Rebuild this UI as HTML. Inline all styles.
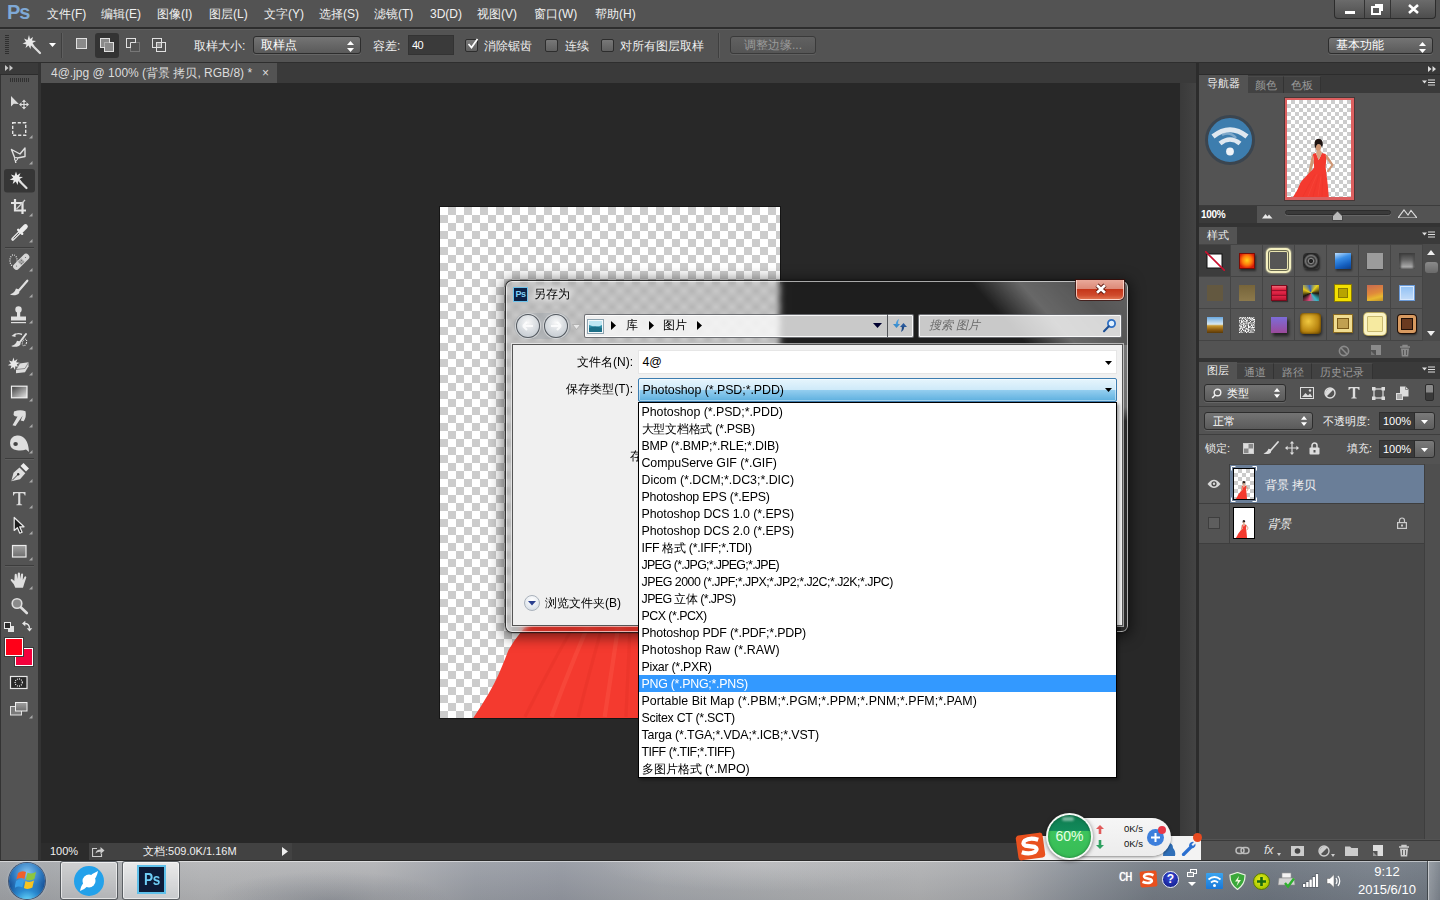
<!DOCTYPE html>
<html lang="zh">
<head>
<meta charset="utf-8">
<title>Photoshop</title>
<style>
*{box-sizing:border-box;margin:0;padding:0}
html,body{width:1440px;height:900px;overflow:hidden;background:#282828}
body{font-family:"Liberation Sans",sans-serif;font-size:12px;color:#e6e6e6;position:relative}
.abs{position:absolute}
/* ---------- menubar ---------- */
#menubar{left:0;top:0;width:1440px;height:29px;background:#535353;border-bottom:2px solid #2d2d2d}
#menubar .logo{left:7px;top:1px;font-size:20px;font-weight:bold;color:#7fa9d6;letter-spacing:-1px}
#menubar .mi{top:7px;line-height:15px;font-size:12px;color:#f0f0f0;white-space:nowrap}
/* ---------- options bar ---------- */
#optbar{left:0;top:29px;width:1440px;height:34px;background:#535353;box-shadow:inset 0 1px 0 #5e5e5e;border-bottom:1px solid #2e2e2e}

.winbtns{left:1334px;top:0;width:102px;height:19px;border:1px solid #2c2c2c;border-top:none;border-radius:0 0 4px 4px;background:linear-gradient(#6b6b6b,#4d4d4d);overflow:hidden}
.wb{top:0;height:18px;border-right:1px solid #333}
.wb:last-child{border-right:none}
.olabel{top:9px;font-size:12px;color:#f0f0f0;white-space:nowrap}
.osep{top:4px;width:1px;height:25px;background:#3f3f3f;border-right:1px solid #5e5e5e;width:2px}
.sel{border:1px solid #2d2d2d;border-radius:3px;background:linear-gradient(#747474,#5a5a5a);color:#fff;font-size:12px;box-shadow:0 1px 0 #666}
.sel .ud{right:6px;top:4px}
.cb{width:13px;height:13px;border:1px solid #2d2d2d;border-radius:2px;background:linear-gradient(#787878,#606060);top:10px}
/* ---------- tools ---------- */
#tools{left:0;top:63px;width:38px;height:797px;background:#535353}
#toolsep{left:38px;top:63px;width:3px;height:797px;background:#333}
/* ---------- tab bar ---------- */
#tabbar{left:41px;top:63px;width:1157px;height:20px;background:#3a3a3a}
#tab{left:0;top:0;width:236px;height:20px;background:#535353;color:#dcdcdc;font-size:12px;line-height:20px;padding-left:10px;white-space:nowrap}
/* ---------- canvas ---------- */
#canvasarea{left:41px;top:83px;width:1157px;height:760px;background:#282828}
#statusbar{left:41px;top:843px;width:1157px;height:17px;background:#3b3b3b}

/* ---------- document ---------- */
#doc{left:440px;top:207px;width:340px;height:511px;background:repeating-conic-gradient(#ccc 0 25%,#fff 0 50%) 0 0/16px 16px;box-shadow:0 0 0 1px #151515;overflow:hidden}
/* ---------- dialog ---------- */
#dlg{left:505px;top:280px;width:624px;height:353px;border-radius:7px;border:1px solid rgba(20,20,20,.85);box-shadow:0 0 0 1px rgba(0,0,0,.12),0 2px 14px 2px rgba(0,0,0,.55);-webkit-backdrop-filter:blur(3px);backdrop-filter:blur(3px);background:linear-gradient(90deg,rgba(0,0,0,.17) 0 268px,rgba(0,0,0,.24) 290px);color:#000;overflow:hidden}
#dlg .hl{left:0;top:0;right:0;bottom:0;border-radius:6px;border:1px solid rgba(255,255,255,.62)}
#dlg .streak{left:395px;top:0;width:229px;height:64px;background:linear-gradient(48deg,transparent 44%,rgba(255,255,255,.33) 61%,rgba(255,255,255,.25) 80%,rgba(255,255,255,.30) 100%)}
#dlg .rside{right:0;top:64px;width:7px;bottom:0;background:linear-gradient(rgba(255,255,255,.40) 0,rgba(255,255,255,.36) 62px,rgba(255,255,255,.05) 76px,rgba(255,255,255,.05) 100%)}
#client{left:6px;top:63px;width:611px;height:282px;border:1px solid #555;background:#f0f0f0;box-shadow:0 0 0 1px rgba(255,255,255,.55)}
.dl{font-size:12px;color:#000;white-space:nowrap}
.lb{left:638px;top:402px;width:479px;box-shadow:2px 2px 3px rgba(0,0,0,.35);height:376px;background:#fff;border:1px solid #000;color:#000;font-size:12.400px}
.lb div{height:17px;line-height:19px;padding-left:2.500px;white-space:nowrap;overflow:hidden}
.lb .selrow{background:#3399ff;color:#fff}

#dlgc{left:0;top:0;width:0;height:0;color:#000}
.navb{width:24px;height:24px;border-radius:12px;border:1px solid rgba(62,68,75,.85);background:radial-gradient(circle at 50% 35%,rgba(255,255,255,.9),rgba(225,230,235,.75) 55%,rgba(190,198,206,.8));box-shadow:0 0 0 1px rgba(255,255,255,.45)}
.addr{height:24px;border:1px solid rgba(95,98,102,.9);border-radius:2px;background:rgba(255,255,255,.76);box-shadow:inset 0 0 0 1px rgba(255,255,255,.85)}
.combo{left:638px;width:479px;height:24px;font-size:12.400px;line-height:23px;padding-left:3.500px;white-space:nowrap;letter-spacing:-.05px}
/* ---------- right ---------- */
#right{left:1198px;top:63px;width:242px;height:797px;background:#535353}

#rp{left:0;top:0;width:0;height:0;font-size:11px;color:#e8e8e8}
.ptab{height:17px;line-height:17px;font-size:11px;text-align:center;white-space:nowrap}
.ptab.on{background:#535353;color:#f0f0f0}
.ptab.off{background:#424242;color:#9a9a9a;border-right:1px solid #333;border-top:1px solid #4a4a4a}
.pmenu{width:13px;height:8px}
.sw{width:16px;height:16px}
.pl{white-space:nowrap;font-size:11px;color:#f0f0f0;line-height:14px}
.dk{background:#3a3a3a;border:1px solid #2f2f2f;color:#fff;font-size:11px;line-height:16px;padding-left:3px}
.btn2{border:1px solid #2d2d2d;border-radius:0 3px 3px 0;background:linear-gradient(#7a7a7a,#5e5e5e)}
/* ---------- taskbar ---------- */
#taskbar{left:0;top:860px;width:1440px;height:40px;background:linear-gradient(rgba(255,255,255,.05),rgba(0,0,0,.07)),radial-gradient(ellipse 120px 30px at 330px 40px,rgba(120,126,136,.5),transparent),radial-gradient(ellipse 160px 26px at 760px 4px,rgba(200,200,202,.5),transparent),linear-gradient(90deg,#a2a5a9 0,#b5b6b8 14%,#b3b4b7 26%,#9b9fa7 33%,#969aa3 39%,#a5a8ad 46%,#adafb2 55%,#b2b3b5 64%,#a7a9ad 70%,#8b9199 75%,#767d86 80%,#6f7781 88%,#78808a 95%,#717983 100%);border-top:1px solid #2a2a2a;box-shadow:inset 0 1px 0 rgba(255,255,255,.5)}
#taskbar .tb{top:0;height:39px;width:58px;border-radius:3px;border:1px solid rgba(50,55,60,.75);box-shadow:inset 0 0 0 1px rgba(255,255,255,.6)}
#tray{color:#fff;font-size:12px}
</style>
</head>
<body>
<svg width="0" height="0" style="position:absolute"><defs><symbol id="wm" viewBox="0 0 64 96.600" preserveAspectRatio="none">
<path d="M26 54Q24.400 55 24.200 58L20.300 78L21.900 78.600L26.800 62Z" fill="#cf9876"/>
<path d="M38.500 54Q40.600 54.400 41.600 57L46.700 64.700L41.200 72.300L39.800 71L44.200 64.800L39 58Z" fill="#cf9876"/>
<path d="M25.900 53.900L29 52.800L31.600 60L35 52.800L38.700 53.900L39.200 60L38.600 67L39.400 73.300Q41 85 41.800 96.600L6 96.600Q9.500 91.500 11 88.100Q12.300 85 12.900 83.400Q14 81.500 15.100 80.200Q20 74.500 25.300 69.600L27.100 67.200L26.800 60Z" fill="#f43a2f"/>
<path d="M29 52.800L31.600 60L35 52.800L33.600 50L30.400 50Z" fill="#d8a483"/>
<ellipse cx="31.300" cy="47.200" rx="2.700" ry="3.400" fill="#cf9673"/>
<path d="M27.600 44.500Q27 39 31.600 38.600Q36.200 39 35.800 44.500Q35 48 34.400 46Q33.500 43.500 30.500 44Q28.800 45 28.800 48Q27.500 47 27.600 44.500Z" fill="#1e1412"/>
<path d="M16 96Q22 84 28 74M26 96Q29 84 32 74M35 96Q35.500 84 36 74" fill="none" stroke="#d42a22" stroke-width=".6" opacity=".22"/><path d="M21 96Q25.500 84 30 74M31 96Q32.500 86 34 76" fill="none" stroke="#ff6a58" stroke-width=".8" opacity=".25"/>
</symbol></defs></svg>
<div id="menubar" class="abs">
  <div class="logo abs">Ps</div>
  <div class="mi abs" style="left:47px">文件(F)</div><div class="mi abs" style="left:101px">编辑(E)</div><div class="mi abs" style="left:157px">图像(I)</div><div class="mi abs" style="left:209px">图层(L)</div><div class="mi abs" style="left:264px">文字(Y)</div><div class="mi abs" style="left:319px">选择(S)</div><div class="mi abs" style="left:374px">滤镜(T)</div><div class="mi abs" style="left:430px">3D(D)</div><div class="mi abs" style="left:477px">视图(V)</div><div class="mi abs" style="left:534px">窗口(W)</div><div class="mi abs" style="left:595px">帮助(H)</div>
  <div class="winbtns abs">
    <div class="wb abs" style="left:0;width:30px"><svg width="30" height="18"><rect x="10" y="11" width="10" height="3" fill="#fff"/></svg></div>
    <div class="wb abs" style="left:30px;width:26px"><svg width="26" height="18"><path d="M10 4h8v7h-2v-4h-6z" fill="#fff"/><rect x="7" y="7" width="8" height="7" fill="none" stroke="#fff" stroke-width="2"/></svg></div>
    <div class="wb abs" style="left:56px;width:46px"><svg width="46" height="18"><path d="M18 5l9 8M27 5l-9 8" stroke="#fff" stroke-width="2.6" fill="none"/></svg></div>
  </div>
</div>
<div id="optbar" class="abs">
  <div class="abs" style="left:5px;top:6px;width:4px;height:20px;background:repeating-linear-gradient(#2f2f2f 0 1px,transparent 1px 2px)"></div>
  <svg class="abs" style="left:21px;top:5px" width="22" height="22" viewBox="0 0 22 22"><path d="M9 9L19 19" stroke="#ddd" stroke-width="2.2" stroke-linecap="round"/><path d="M8 1l1 4 3-2-1 3.5 4 .5-3.5 2 2 3-3.5-1-.5 4-2-3.5-3 2.500 1-3.500-4-1 3.500-1.500-2-3.500 3.500 1.500z" fill="#e8e8e8"/></svg>
  <svg class="abs" style="left:49px;top:14px" width="7" height="4"><path d="M0 0h7l-3.500 4z" fill="#fff"/></svg>
  <div class="osep abs" style="left:61px"></div>
  <svg class="abs" style="left:76px;top:9px" width="11" height="11"><rect x=".5" y=".5" width="10" height="10" fill="#8a8a8a" stroke="#e0e0e0"/></svg>
  <div class="abs" style="left:95px;top:4px;width:24px;height:25px;background:#333;border-radius:3px"></div>
  <svg class="abs" style="left:100px;top:9px" width="14" height="14"><rect x=".5" y=".5" width="9" height="9" fill="#8a8a8a" stroke="#e0e0e0"/><rect x="4.500" y="4.500" width="9" height="9" fill="#8a8a8a" stroke="#e0e0e0"/><rect x="1" y="1" width="8" height="8" fill="#8a8a8a" opacity=".6"/></svg>
  <svg class="abs" style="left:126px;top:9px" width="14" height="14"><rect x="4.500" y="4.500" width="9" height="9" fill="none" stroke="#777"/><rect x=".5" y=".5" width="9" height="9" fill="#535353" stroke="#e0e0e0"/><rect x="5" y="5" width="5" height="5" fill="#535353"/><path d="M4.500 9.500v-5h5" stroke="#e0e0e0" fill="none"/></svg>
  <svg class="abs" style="left:152px;top:9px" width="14" height="14"><rect x=".5" y=".5" width="9" height="9" fill="none" stroke="#e0e0e0"/><rect x="4.500" y="4.500" width="9" height="9" fill="none" stroke="#e0e0e0"/><rect x="5" y="5" width="4" height="4" fill="#8a8a8a"/></svg>
  <div class="olabel abs" style="left:194px">取样大小:</div>
  <div class="sel abs" style="left:253px;top:7px;width:108px;height:18px;line-height:16px;padding-left:7px">取样点<svg class="ud abs" width="7" height="11"><path d="M0 4l3.5-4 3.5 4zM0 7l3.5 4 3.5-4z" fill="#fff"/></svg></div>
  <div class="olabel abs" style="left:373px">容差:</div>
  <div class="abs" style="left:408px;top:6px;width:46px;height:20px;background:#3a3a3a;border:1px solid #333;color:#fff;font-size:11px;line-height:18px;padding-left:3px;letter-spacing:-.5px">40</div>
  <div class="cb abs" style="left:465px"><svg class="abs" style="left:1px;top:-2px" width="13" height="12"><path d="M1.500 6l3 3.500 6-8.500" stroke="#fff" stroke-width="1.700" fill="none"/></svg></div>
  <div class="olabel abs" style="left:484px">消除锯齿</div>
  <div class="cb abs" style="left:545px"></div>
  <div class="olabel abs" style="left:565px">连续</div>
  <div class="cb abs" style="left:601px"></div>
  <div class="olabel abs" style="left:620px">对所有图层取样</div>
  <div class="osep abs" style="left:718px"></div>
  <div class="abs" style="left:730px;top:7px;width:86px;height:18px;border:1px solid #3a3a3a;border-radius:3px;background:linear-gradient(#616161,#555);color:#9a9a9a;font-size:12px;line-height:16px;text-align:center;box-shadow:0 1px 0 #606060">调整边缘...</div>
  <div class="sel abs" style="left:1328px;top:8px;width:105px;height:17px;line-height:15px;padding-left:7px">基本功能<svg class="ud abs" width="7" height="11"><path d="M0 4l3.5-4 3.5 4zM0 7l3.5 4 3.5-4z" fill="#fff"/></svg></div>
</div>
<div id="tools" class="abs"></div>
<div id="toolsep" class="abs"></div>
<div class="abs" style="left:0;top:63px;width:1px;height:797px;background:#333"></div>
<svg class="abs" style="left:0;top:0" width="42" height="900" viewBox="0 0 42 900">
<defs>
<linearGradient id="gA" x1="0" y1="0" x2="1" y2="1"><stop offset="0" stop-color="#3a3a3a"/><stop offset="1" stop-color="#e8e8e8"/></linearGradient>
<linearGradient id="gB" x1="0" y1="0" x2="0" y2="1"><stop offset="0" stop-color="#a0a0a0"/><stop offset="1" stop-color="#6e6e6e"/></linearGradient>
</defs>
<rect x="0" y="63" width="38" height="12" fill="#3a3a3a"/>
<rect x="0" y="74" width="38" height="1" fill="#2c2c2c"/>
<path d="M5 65v6l3.500-3zM9.500 65v6l3.500-3z" fill="#c8c8c8"/>
<g fill="#303030"><rect x="10" y="78" width="1" height="4"/><rect x="12" y="78" width="1" height="4"/><rect x="14" y="78" width="1" height="4"/><rect x="16" y="78" width="1" height="4"/><rect x="18" y="78" width="1" height="4"/><rect x="20" y="78" width="1" height="4"/><rect x="22" y="78" width="1" height="4"/><rect x="24" y="78" width="1" height="4"/><rect x="26" y="78" width="1" height="4"/><rect x="28" y="78" width="1" height="4"/></g>
<g fill="#a8a8a8"><path d="M32.500 135v3.500h-3.500z"/><path d="M32.500 161v3.500h-3.500z"/><path d="M32.500 187v3.500h-3.500z"/><path d="M32.500 213v3.500h-3.500z"/><path d="M32.500 239v3.500h-3.500z"/><path d="M32.500 268v3.500h-3.500z"/><path d="M32.500 294v3.500h-3.500z"/><path d="M32.500 320v3.500h-3.500z"/><path d="M32.500 346v3.500h-3.500z"/><path d="M32.500 372v3.500h-3.500z"/><path d="M32.500 398v3.500h-3.500z"/><path d="M32.500 424v3.500h-3.500z"/><path d="M32.500 450v3.500h-3.500z"/><path d="M32.500 479v3.500h-3.500z"/><path d="M32.500 505v3.500h-3.500z"/><path d="M32.500 531v3.500h-3.500z"/><path d="M32.500 557v3.500h-3.500z"/><path d="M32.500 586v3.500h-3.500z"/><path d="M32.500 715v3.500h-3.500z"/></g>
<!-- move -->
<path d="M11 96v10.500l2.800-2.800 5 .2z" fill="#dcdcdc"/>
<g stroke="#dcdcdc" stroke-width="1.200" fill="none"><path d="M20.500 104.500h7M24 101v7"/></g>
<path d="M24 99.500l2.200 2.500h-4.400zM24 109.500l2.200-2.500h-4.400zM19 104.500l2.500-2.200v4.400zM29 104.500l-2.500-2.200v4.400z" fill="#dcdcdc"/>
<!-- marquee -->
<rect x="12.700" y="122.700" width="13" height="12.600" fill="none" stroke="#e4e4e4" stroke-width="1.400" stroke-dasharray="3.200 1.800"/>
<!-- lasso -->
<path d="M11.500 149.500l8.500 4.500 5-6v8.500l-10 2zM15 158.500l.8 4.500" fill="none" stroke="#e0e0e0" stroke-width="1.400" stroke-linejoin="round"/>
<circle cx="16" cy="159" r="1.500" fill="#535353" stroke="#e0e0e0"/>
<!-- wand active -->
<rect x="4" y="169" width="31" height="23.500" rx="3" fill="#363636"/>
<path d="M16 171.500l1.200 3.800 3.300-2.300-1.500 3.700 4 .3-3.400 2 2.300 3-3.700-1-.5 4-2-3.400-3 2.400 1-3.700-4-.6 3.500-2-2.300-3.200 3.700 1.200z" fill="#ececec"/>
<path d="M19.500 181l7 7" stroke="#e0e0e0" stroke-width="2.200" stroke-linecap="round"/>
<!-- crop -->
<path d="M15 199v11.500h11M11 203h11.500v11" fill="none" stroke="#e4e4e4" stroke-width="2.200"/>
<path d="M16.500 209l8.500-9" stroke="#d0d0d0" stroke-width="1.200"/>
<!-- eyedropper -->
<path d="M12.800 239.200l7.500-7.500" stroke="#e0e0e0" stroke-width="3.200" stroke-linecap="round"/>
<path d="M13.500 238.500l6-6" stroke="#666" stroke-width="1"/>
<path d="M21.500 230.500l4-4" stroke="#ececec" stroke-width="4.600" stroke-linecap="round"/>
<path d="M18.200 229.800l4 4" stroke="#ececec" stroke-width="2.400" stroke-linecap="round"/>
<!-- sep -->
<rect x="5" y="247" width="29" height="1" fill="#3c3c3c"/><rect x="5" y="248" width="29" height="1" fill="#5d5d5d"/>
<!-- heal -->
<ellipse cx="13.500" cy="260.500" rx="3.600" ry="5.600" fill="none" stroke="#f0f0f0" stroke-width="1.200" stroke-dasharray="1 1.200"/>
<path d="M16.500 266.500l9.500-9.500" stroke="#d6d6d6" stroke-width="6.600" stroke-linecap="round"/>
<path d="M19.500 263.500l3.500-3.500" stroke="#aaa" stroke-width="5"/>
<g fill="#666"><circle cx="20" cy="262" r=".6"/><circle cx="21.500" cy="263.500" r=".6"/><circle cx="21.500" cy="260.500" r=".6"/><circle cx="23" cy="262" r=".6"/><circle cx="16.500" cy="266" r=".6"/><circle cx="25.500" cy="257.500" r=".6"/></g>
<!-- brush -->
<path d="M27.300 280.700l-8 9.300" stroke="#e0e0e0" stroke-width="2.200" stroke-linecap="round"/>
<path d="M19.200 289.500q1.300 5-4 5.700q-4 .3-5.200-1q4.500-1 6-5.700z" fill="#e0e0e0"/>
<!-- stamp -->
<circle cx="18.500" cy="309.500" r="3.200" fill="#e0e0e0"/><rect x="17" y="311" width="3.200" height="6" fill="#e0e0e0"/>
<rect x="11" y="316.500" width="15" height="4" fill="#e0e0e0"/><rect x="11" y="322" width="15" height="1.200" fill="#e0e0e0"/>
<!-- history brush -->
<path d="M26 334l-6 8" stroke="#e0e0e0" stroke-width="2" stroke-linecap="round"/>
<path d="M20.300 341.500q1.200 4.500-3.500 5.200q-4 .3-5.600-.8q4.500-1 5.800-5.200z" fill="#e0e0e0"/>
<path d="M14 335q4-2.500 8-.5" fill="none" stroke="#e0e0e0" stroke-width="1.400"/><path d="M11.500 336l4-3v4z" fill="#e0e0e0"/>
<ellipse cx="24.500" cy="342.500" rx="2" ry="3.500" fill="none" stroke="#eee" stroke-width="1" stroke-dasharray="1 1" transform="rotate(20 24.500 342.500)"/>
<!-- magic eraser -->
<path d="M13.500 357.500l1 3.500 3-2-1.400 3.300 3.600.4-3 1.800 2 2.700-3.300-.9-.4 3.600-1.800-3-2.700 2.100.9-3.300-3.600-.5 3.100-1.800-2-2.900 3.300 1.100z" fill="#e8e8e8"/>
<path d="M16 369.500l3.500-6 9-1.200v4l-3.500 6-9 1z" fill="#dcdcdc"/><path d="M19.500 363.700l-3.500 5.800 9-1 3.500-6" fill="none" stroke="#777" stroke-width=".8"/>
<!-- gradient -->
<rect x="11.500" y="386.200" width="15.500" height="11.600" fill="url(#gA)" stroke="#f0f0f0" stroke-width="1.200"/>
<!-- smudge -->
<path d="M14 411.500q6-2.500 11.500-.3q1.200 5.500-1.800 10l-3-.8 2-4.800-7.200 10.400-3-.8 5-8.700q-3.200.6-4-1.700z" fill="#dedede"/>
<!-- dodge -->
<path d="M10 443q0-6.500 7-7.500q5-.5 8.500 4q3 4 3.500 12.500l-3-2.500q-4 1.500-9 .8q-7-.8-7-7.300z" fill="#dedede"/>
<ellipse cx="15.600" cy="444" rx="2.300" ry="1.900" fill="#444"/>
<!-- sep -->
<rect x="5" y="458" width="29" height="1" fill="#3c3c3c"/><rect x="5" y="459" width="29" height="1" fill="#5d5d5d"/>
<!-- pen -->
<path d="M11.300 481.300l2.200-8.500 6-5.300 5.800 5.800-5.300 6z" fill="#dedede"/>
<path d="M12 480.500l6-6" stroke="#444" stroke-width="1"/><circle cx="18.200" cy="474.300" r="1.200" fill="#333"/>
<path d="M20.500 466l3-3 5.500 5.500-3 3z" fill="#ececec"/>
<!-- T -->
<path d="M13 492h12.500v3.500h-.8q-.4-2.300-2-2.300h-2.400v10q0 1.200 1.800 1.300v.8h-5.700v-.8q1.800-.1 1.800-1.300v-10h-2.400q-1.600 0-2 2.300h-.8z" fill="#dcdcdc"/>
<!-- path select -->
<path d="M14.200 517.500v13l3.200-2.800 2.400 5.500 2.300-1-2.400-5.400h4.300z" fill="#1c1c1c" stroke="#ececec" stroke-width="1.200" stroke-linejoin="round"/>
<!-- rectangle -->
<rect x="12.500" y="545.500" width="13.500" height="11.500" fill="url(#gB)" stroke="#ececec" stroke-width="1.200"/>
<!-- sep -->
<rect x="5" y="565" width="29" height="1" fill="#3c3c3c"/><rect x="5" y="566" width="29" height="1" fill="#5d5d5d"/>
<!-- hand -->
<path d="M15.300 587.800l-1.500-3.500-3-3.800q-.5-1.200.7-1.400q1 0 2.800 2l.4-6.300q.2-1 1.100-1q1 0 1 1l.5 4.200.5-5.600q.1-1 1.100-1t1.100 1l.1 5.600.9-4.600q.2-1 1.100-.9q1 .1 1 1.100l-.3 5.300 1.600-2.900q.5-.9 1.300-.6q.9.400.5 1.400l-2 6-1.200 4z" fill="#dedede"/>
<!-- zoom -->
<circle cx="17" cy="603.500" r="4.800" fill="#8a8a8a" stroke="#dedede" stroke-width="1.600"/>
<path d="M21 607.500l5.800 5.500" stroke="#dedede" stroke-width="2.600" stroke-linecap="round"/>
<!-- default colors / swap -->
<rect x="8" y="626" width="6" height="6" fill="#e0e0e0"/><rect x="4.500" y="622.500" width="6" height="6" fill="#2a2a2a" stroke="#e8e8e8"/>
<path d="M24.500 623.500q5 0 5 5" fill="none" stroke="#e4e4e4" stroke-width="1.300"/><path d="M22 623.500l3.300-2.800v5.600zM29.500 631.500l-2.800-3.300h5.600z" fill="#e4e4e4"/>
<!-- bg / fg colors -->
<rect x="15.500" y="648.500" width="17" height="17" fill="#f4003c" stroke="#fff"/><rect x="14.500" y="647.500" width="19" height="19" fill="none" stroke="#3a3a3a"/>
<rect x="5.500" y="638.500" width="17" height="17" fill="#ff0018" stroke="#fff"/><rect x="4.500" y="637.500" width="19" height="19" fill="none" stroke="#3a3a3a"/>
<!-- quick mask -->
<rect x="10.500" y="676.500" width="16.500" height="12" fill="#2a2a2a" stroke="#e8e8e8" stroke-width="1.200"/>
<circle cx="18.700" cy="682.500" r="3.600" fill="none" stroke="#fff" stroke-width="1.100" stroke-dasharray="1 1.100"/>
<!-- screen mode -->
<rect x="10.500" y="706.500" width="11" height="8.500" fill="#7a7a7a" stroke="#e0e0e0"/>
<rect x="15.500" y="702.500" width="11.500" height="8.500" fill="url(#gB)" stroke="#f0f0f0"/>
</svg>
<div id="tabbar" class="abs"><div id="tab" class="abs">4@.jpg @ 100% (背景 拷贝, RGB/8) * &nbsp;&nbsp;×</div></div>
<div id="canvasarea" class="abs"></div>
<div id="statusbar" class="abs">
  <div class="abs" style="left:0;top:0;width:48px;height:17px;background:#2c2c2c;color:#f0f0f0;font-size:11px;line-height:16px;padding-left:9px">100%</div>
  <div class="abs" style="left:48px;top:0;width:203px;height:17px;background:#424242"></div>
  <svg class="abs" style="left:51px;top:3px" width="13" height="11"><path d="M5 2.500h-4.500v8h9v-3" fill="none" stroke="#ccc" stroke-width="1.200"/><path d="M3.500 7.500q.5-4 5-4v-2.500l4 3.500-4 3.500v-2.300q-3.500-.2-5 1.800z" fill="#ccc"/></svg>
  <div class="abs" style="left:102px;top:0;color:#f0f0f0;font-size:11px;line-height:16px;white-space:nowrap">文档:509.0K/1.16M</div>
  <svg class="abs" style="left:241px;top:4px" width="6" height="9"><path d="M0 0l6 4.500-6 4.500z" fill="#eee"/></svg>
</div>
<div id="doc" class="abs">
  <svg class="abs" style="left:0;top:0" width="340" height="511"><use href="#wm" x="0" y="0" width="340" height="513"/></svg>
</div>
<div id="dlg" class="abs">
  <div class="streak abs"></div>
  <div class="rside abs"></div>
  <div class="hl abs"></div>
  <div id="client" class="abs"></div>
</div>
<div id="dlgc" class="abs">
  <div class="abs" style="left:513px;top:287px;width:15px;height:15px;background:#0b2146;border:1px solid #6ec3ea;color:#7fd0f5;font-size:9px;font-weight:bold;line-height:13px;text-align:center;letter-spacing:-.5px">Ps</div>
  <div class="dl abs" style="left:534px;top:287px;line-height:15px;text-shadow:0 0 6px #fff,0 0 6px #fff,0 0 8px #fff">另存为</div>
  <div class="abs" style="left:1076px;top:280px;width:48px;height:20px;border:1px solid rgba(255,225,215,.8);border-top:none;border-radius:0 0 5px 5px;background:linear-gradient(#e9a99a 0,#dd8a78 45%,#c5361a 50%,#cf4a2c 80%,#e0724f 100%);box-shadow:0 0 0 1px rgba(60,10,5,.7)"><svg class="abs" style="left:17px;top:3px" width="14" height="12"><path d="M3 2.200l8 7.600M11 2.200l-8 7.600" stroke="#5a1208" stroke-width="4.400" fill="none"/><path d="M3 2.200l8 7.600M11 2.200l-8 7.600" stroke="#fff" stroke-width="2.700" fill="none"/></svg></div>
  <div class="abs" style="left:514px;top:313px;width:57px;height:26px;border-radius:13px;background:rgba(150,158,165,.35)"></div>
  <div class="navb abs" style="left:516px;top:314px"><svg width="22" height="22"><path d="M6 11h10M6 11l4-4M6 11l4 4" stroke="rgba(255,255,255,.8)" stroke-width="2.200" fill="none"/></svg></div>
  <div class="navb abs" style="left:544px;top:314px"><svg width="22" height="22"><path d="M6 11h10M16 11l-4-4M16 11l-4 4" stroke="rgba(255,255,255,.8)" stroke-width="2.200" fill="none"/></svg></div>
  <svg class="abs" style="left:572px;top:324px" width="9" height="6"><path d="M.5.5h8l-4 5z" fill="#e8e8e8" stroke="#aaa" stroke-width=".8"/></svg>
  <div class="addr abs" style="left:584px;top:313.500px;width:330px"></div>
  <div class="abs" style="left:887px;top:314px;width:1px;height:23px;background:rgba(70,72,76,.9)"></div>
  <div class="addr abs" style="left:918px;top:313.500px;width:204px"></div>
  <svg class="abs" style="left:587px;top:319px" width="17" height="15"><rect x=".5" y=".5" width="16" height="14" fill="#f4f8fa" stroke="#8fa4b0"/><rect x="2" y="2" width="13" height="11" fill="#2f8fa8"/><path d="M2 2h13v4q-5 3-13 0z" fill="#bfe6f2"/><path d="M2 9q6-3 13 0v4h-13z" fill="#1d6f87"/></svg>
  <svg class="abs" style="left:611px;top:321px" width="6" height="9"><path d="M0 0l5 4.500-5 4.500z" fill="#000"/></svg>
  <div class="dl abs" style="left:626px;top:318px;line-height:15px">库</div>
  <svg class="abs" style="left:649px;top:321px" width="6" height="9"><path d="M0 0l5 4.500-5 4.500z" fill="#000"/></svg>
  <div class="dl abs" style="left:663px;top:318px;line-height:15px">图片</div>
  <svg class="abs" style="left:697px;top:321px" width="6" height="9"><path d="M0 0l5 4.500-5 4.500z" fill="#000"/></svg>
  <svg class="abs" style="left:873px;top:323px" width="9" height="5"><path d="M0 0h9l-4.500 5z" fill="#000030"/></svg>
  <svg class="abs" style="left:891px;top:317px" width="18" height="17" viewBox="0 0 18 17"><path d="M2 7h7l-3.500 4z" fill="#3a8ccc"/><path d="M4.700 7.500q.3-4 3.300-5.500q-1.200 2.500-.8 5.500z" fill="#4a9cdc"/><path d="M9 10h7l-3.500-4z" fill="#2a5a9c"/><path d="M13.300 9.500q-.3 4-3.300 5.500q1.200-2.500.8-5.500z" fill="#1f4a86"/></svg>
  <div class="abs" style="left:929px;top:318px;font-size:12px;line-height:15px;font-style:italic;color:#6d6d6d;white-space:nowrap">搜索 图片</div>
  <svg class="abs" style="left:1102px;top:318px" width="15" height="15"><circle cx="9.500" cy="5.500" r="3.600" fill="#dff0ff" stroke="#2d6fc4" stroke-width="1.800"/><path d="M6.800 8.200l-4.800 5" stroke="#1d4f94" stroke-width="2" stroke-linecap="round"/></svg>
  <div class="dl abs" style="left:540px;top:355px;width:93px;text-align:right;line-height:15px">文件名(N):</div>
  <div class="combo abs" style="top:350px;background:#fff;border:1px solid #e6e6e6">4@<svg class="abs" style="right:4px;top:10px" width="7" height="4"><path d="M0 0h7l-3.500 4z" fill="#000"/></svg></div>
  <div class="dl abs" style="left:540px;top:382px;width:93px;text-align:right;line-height:15px">保存类型(T):</div>
  <div class="combo abs" style="top:378px;border:1px solid #3b7cb0;border-radius:2px;background:linear-gradient(#e6f5fd 0,#cfeaf9 48%,#92cdef 52%,#5eb0df 100%);box-shadow:inset 0 0 0 1px rgba(255,255,255,.45)">Photoshop (*.PSD;*.PDD)<svg class="abs" style="right:4px;top:9px" width="7" height="4"><path d="M0 0h7l-3.500 4z" fill="#000"/></svg></div>
  <div class="dl abs" style="left:630px;top:449px;width:8px;overflow:hidden;line-height:15px">存</div>
  <div class="abs" style="left:524px;top:595px;width:16px;height:16px;border-radius:8px;border:1px solid #a9b1bb;background:radial-gradient(circle at 50% 30%,#fff,#e4e9ef 60%,#cdd5df)"><svg class="abs" style="left:3px;top:5px" width="8" height="5"><path d="M0 0h8l-4 4.500z" fill="#2a3f8f"/></svg></div>
  <div class="dl abs" style="left:545px;top:596px;line-height:15px">浏览文件夹(B)</div>
</div>
<div class="lb abs"><div style="letter-spacing:-0.05px">Photoshop (*.PSD;*.PDD)</div><div style="letter-spacing:-0.25px">大型文档格式 (*.PSB)</div><div style="letter-spacing:-0.18px">BMP (*.BMP;*.RLE;*.DIB)</div><div style="letter-spacing:-0.08px">CompuServe GIF (*.GIF)</div><div style="letter-spacing:-0.01px">Dicom (*.DCM;*.DC3;*.DIC)</div><div style="letter-spacing:-0.19px">Photoshop EPS (*.EPS)</div><div style="letter-spacing:-0.07px">Photoshop DCS 1.0 (*.EPS)</div><div style="letter-spacing:-0.07px">Photoshop DCS 2.0 (*.EPS)</div><div style="letter-spacing:-0.3px">IFF 格式 (*.IFF;*.TDI)</div><div style="letter-spacing:-0.7px">JPEG (*.JPG;*.JPEG;*.JPE)</div><div style="letter-spacing:-0.5px">JPEG 2000 (*.JPF;*.JPX;*.JP2;*.J2C;*.J2K;*.JPC)</div><div style="letter-spacing:-0.57px">JPEG 立体 (*.JPS)</div><div style="letter-spacing:-0.52px">PCX (*.PCX)</div><div style="letter-spacing:-0.18px">Photoshop PDF (*.PDF;*.PDP)</div><div style="letter-spacing:0.11px">Photoshop Raw (*.RAW)</div><div style="letter-spacing:-0.28px">Pixar (*.PXR)</div><div class="selrow" style="letter-spacing:-0.27px">PNG (*.PNG;*.PNS)</div><div style="letter-spacing:0.07px">Portable Bit Map (*.PBM;*.PGM;*.PPM;*.PNM;*.PFM;*.PAM)</div><div style="letter-spacing:-0.29px">Scitex CT (*.SCT)</div><div style="letter-spacing:-0.14px">Targa (*.TGA;*.VDA;*.ICB;*.VST)</div><div style="letter-spacing:-0.49px">TIFF (*.TIF;*.TIFF)</div><div style="letter-spacing:0.0px">多图片格式 (*.MPO)</div></div>

<div id="right" class="abs"></div>
<div id="rp" class="abs">
  <div class="abs" style="left:1180px;top:83px;width:16px;height:760px;background:linear-gradient(90deg,#3a3a3a,#434343)"></div>
  <div class="abs" style="left:1196px;top:63px;width:3px;height:797px;background:#2c2c2c"></div>
  <div class="abs" style="left:1199px;top:63px;width:241px;height:12px;background:#383838;border-bottom:1px solid #2c2c2c"></div>
  <svg class="abs" style="left:1428px;top:66px" width="8" height="6"><path d="M0 0v6l3.500-3zM4.500 0v6l3.500-3z" fill="#ddd"/></svg>
  <!-- navigator -->
  <div class="abs" style="left:1199px;top:75px;width:241px;height:18px;background:#3a3a3a"></div>
  <div class="ptab on abs" style="left:1199px;top:75px;width:49px;height:18px">导航器</div>
  <div class="ptab off abs" style="left:1248px;top:76px;width:36px">颜色</div>
  <div class="ptab off abs" style="left:1284px;top:76px;width:37px">色板</div>
  <svg class="pmenu abs" style="left:1422px;top:79px" width="14" height="9"><path d="M0 1.500h5l-2.500 3z" fill="#ddd"/><path d="M6 1h8M6 3.500h8M6 6h8M6 8.500h8" stroke="#ddd" stroke-width="1"/></svg>
  <div class="abs" style="left:1205px;top:115px;width:50px;height:50px;border-radius:25px;background:#3d7dae;border:3px solid #3b454f"></div>
  <svg class="abs" style="left:1205px;top:115px" width="50" height="50" viewBox="0 0 50 50"><path d="M8 21.500q17-13.500 34 0" fill="none" stroke="#dfe8f0" stroke-width="5"/><path d="M15 28.500q10-8 20 0" fill="none" stroke="#dfe8f0" stroke-width="4.600"/><path d="M17 20q8-4 14 3" fill="none" stroke="#a8c4dc" stroke-width="2.500" opacity=".6"/><circle cx="25" cy="36.500" r="3.900" fill="#eef3f8"/></svg>
  <div class="abs" style="left:1285px;top:98px;width:69px;height:102px;border:2px solid #dc5f5f;border-right-width:3px;border-bottom-width:3px;background:repeating-conic-gradient(#ccc 0 25%,#fff 0 50%) 0 0/8px 8px;box-shadow:0 0 0 1px rgba(60,30,30,.5)"></div>
  <svg class="abs" style="left:1287px;top:100px" width="64" height="97"><use href="#wm" x="0" y="0" width="64" height="97"/></svg>
  <div class="abs" style="left:1199px;top:205px;width:241px;height:1px;background:#3c3c3c"></div>
  <div class="abs" style="left:1199px;top:206px;width:58px;height:17px;background:#3a3a3a;color:#fff;font-size:10px;font-weight:bold;line-height:17px;padding-left:2px;letter-spacing:-.3px">100%</div>
  <svg class="abs" style="left:1262px;top:213px" width="11" height="6"><path d="M0 5.500l3.500-4.500 2 2.500 1.500-2 3.500 4z" fill="#e8e8e8"/></svg>
  <div class="abs" style="left:1285px;top:210px;width:106px;height:5px;border-radius:3px;background:#3a3a3a;border:1px solid #2c2c2c;box-shadow:0 1px 0 #666"></div>
  <svg class="abs" style="left:1332px;top:211px" width="11" height="10"><path d="M5.500 0l5 5v4.500h-10v-4.500z" fill="#b8b8b8" stroke="#333" stroke-width=".8"/></svg>
  <svg class="abs" style="left:1398px;top:209px" width="19" height="9"><path d="M0 9l6-8 4 5 3-4.500 6 7.500z" fill="none" stroke="#ddd" stroke-width="1.100"/></svg>
  <div class="abs" style="left:1199px;top:223px;width:241px;height:4px;background:#333"></div>
  <!-- styles -->
  <div class="abs" style="left:1199px;top:227px;width:241px;height:17px;background:#3a3a3a"></div>
  <div class="ptab on abs" style="left:1199px;top:227px;width:38px">样式</div>
  <svg class="pmenu abs" style="left:1422px;top:231px" width="14" height="9"><path d="M0 1.500h5l-2.500 3z" fill="#ddd"/><path d="M6 1h8M6 3.500h8M6 6h8M6 8.500h8" stroke="#ddd" stroke-width="1"/></svg>
  <div class="abs" style="left:1199px;top:244px;width:224px;height:97px;background:#555"></div>
  <div class="abs" style="left:1230px;top:245px;width:1px;height:96px;background:#444"></div><div class="abs" style="left:1262px;top:245px;width:1px;height:96px;background:#444"></div><div class="abs" style="left:1294px;top:245px;width:1px;height:96px;background:#444"></div><div class="abs" style="left:1326px;top:245px;width:1px;height:96px;background:#444"></div><div class="abs" style="left:1358px;top:245px;width:1px;height:96px;background:#444"></div><div class="abs" style="left:1390px;top:245px;width:1px;height:96px;background:#444"></div><div class="abs" style="left:1422px;top:245px;width:1px;height:96px;background:#444"></div><div class="abs" style="left:1199px;top:244px;width:224px;height:1px;background:#444"></div><div class="abs" style="left:1199px;top:276px;width:224px;height:1px;background:#444"></div><div class="abs" style="left:1199px;top:308px;width:224px;height:1px;background:#444"></div><div class="abs" style="left:1199px;top:340px;width:224px;height:1px;background:#444"></div>
  <div class="abs" style="left:1199px;top:245px;width:31px;height:31px;background:#3c3c3c"></div><svg class="abs" style="left:1205px;top:251px" width="20" height="20"><rect x="2" y="3" width="15" height="14" fill="#fff" stroke="#111"/><path d="M0 0l20 20" stroke="#c8102e" stroke-width="1.600"/></svg><div class="sw abs" style="left:1239px;top:253px;background:radial-gradient(circle at 50% 45%,#ffd21a 0,#ff7a0a 45%,#d81a08 80%);border:1px solid #7a0c04;box-shadow:1px 2px 2px rgba(0,0,0,.5)"></div><div class="abs" style="left:1266px;top:248px;width:25px;height:25px;border:2px solid #f4f0c0;border-radius:5px;box-shadow:0 0 2px #fff8c0,inset 0 0 0 1px #6a6a50,inset 0 0 0 2px #e8e4b0"></div><div class="sw abs" style="left:1303px;top:253px;background:radial-gradient(circle at 50% 50%,#222 0 15%,#888 22%,#333 35%,#777 48%,#222 65%,#444 100%);border-radius:4px;box-shadow:1px 2px 2px rgba(0,0,0,.5)"></div><div class="sw abs" style="left:1335px;top:253px;background:linear-gradient(160deg,#bfe0ff 0,#3a8ee6 35%,#1560c0 70%,#0d3f8a);box-shadow:1px 2px 2px rgba(0,0,0,.45)"></div><div class="sw abs" style="left:1367px;top:253px;background:#9c9c9c;box-shadow:0 1px 1px rgba(0,0,0,.3)"></div><div class="sw abs" style="left:1399px;top:253px;background:linear-gradient(#3c3c3c,#6a6a6a 45%,#a8a8a8 85%,#8c8c8c);box-shadow:inset 2px 0 2px rgba(60,60,60,.8),inset -2px 0 2px rgba(70,70,70,.8)"></div><div class="sw abs" style="left:1207px;top:285px;background:#6f5c30;opacity:.55;filter:blur(.6px)"></div><div class="sw abs" style="left:1239px;top:285px;background:linear-gradient(#76643a,#8d7a4c)"></div><div class="sw abs" style="left:1271px;top:285px;background:linear-gradient(#f06878 0,#e0203e 26%,#98102a 30% 36%,#e8284a 40%,#d01c3c 60%,#98102a 64% 70%,#e02444 74%,#b81430 100%);border:1px solid #7c0a1c;box-shadow:1px 1px 1px rgba(0,0,0,.4)"></div><div class="sw abs" style="left:1303px;top:285px;background:conic-gradient(from 40deg,#e8d020,#201810,#38b8c8,#e04878,#181410,#e8c818,#3060c0,#e8d020)"></div><div class="sw abs" style="left:1335px;top:285px;background:#b8a400;border:3px solid #f2e000;box-shadow:inset 0 0 0 1px #8a7a00,0 0 0 1px #8a7a00"></div><div class="sw abs" style="left:1367px;top:285px;background:linear-gradient(165deg,#c86a50 0,#e08a3a 50%,#e8b830 75%,#c09028)"></div><div class="sw abs" style="left:1399px;top:285px;background:linear-gradient(#8fc0f4,#c4dcf8);border:1px solid #6a9ad8;box-shadow:inset 0 0 0 1px #d8e8fc"></div><div class="sw abs" style="left:1207px;top:317px;background:linear-gradient(#6aa8e0 0,#d8e8f0 45%,#c89830 55%,#8a5a10 80%,#5a3a08)"></div><svg class="abs" style="left:1239px;top:317px" width="16" height="16"><filter id="nz" x="0" y="0" width="100%" height="100%"><feTurbulence type="fractalNoise" baseFrequency=".85" numOctaves="2" seed="4"/><feColorMatrix type="matrix" values="0 0 0 0 0  0 0 0 0 0  0 0 0 0 0  2.4 2.4 0 0 -1.900"/><feComposite in="SourceGraphic" operator="in"/></filter><rect width="16" height="16" fill="#5c5c5c"/><rect width="16" height="16" fill="#fff" filter="url(#nz)"/></svg><div class="sw abs" style="left:1271px;top:317px;background:linear-gradient(#7c6cd8,#9a4a9a);box-shadow:2px 3px 3px rgba(0,0,0,.6)"></div><div class="abs" style="left:1300px;top:313px;width:21px;height:21px;border-radius:4px;background:radial-gradient(circle at 40% 40%,#f0c840,#b88410 60%,#7a5200);box-shadow:1px 2px 3px rgba(0,0,0,.55),inset 0 0 3px #4a3000"></div><div class="abs" style="left:1334px;top:315px;width:18px;height:17px;background:#c0a050;border:3px solid #f0dc90;box-shadow:0 0 0 1px #8a6a20,inset 0 0 0 1px #7a5a18,1px 2px 2px rgba(0,0,0,.4)"></div><div class="abs" style="left:1364px;top:313px;width:22px;height:22px;border-radius:4px;background:#f6eaa0;border:3px solid #fbf3c4;box-shadow:0 0 0 1px #b8a860,inset 0 0 0 1px #c8b870,1px 2px 3px rgba(0,0,0,.5)"></div><div class="abs" style="left:1398px;top:315px;width:18px;height:18px;border-radius:3px;background:#6a3a20;border:3px solid #d89a60;box-shadow:0 0 0 1px #201008,inset 0 0 0 1px #201008,1px 2px 2px rgba(0,0,0,.5)"></div>
  <div class="abs" style="left:1423px;top:244px;width:17px;height:97px;background:#4a4a4a"></div>
  <svg class="abs" style="left:1427px;top:250px" width="8" height="5"><path d="M0 5h8l-4-5z" fill="#eee"/></svg>
  <div class="abs" style="left:1425px;top:262px;width:13px;height:11px;border-radius:3px;background:linear-gradient(#8a8a8a,#6a6a6a)"></div>
  <svg class="abs" style="left:1427px;top:331px" width="8" height="5"><path d="M0 0h8l-4 5z" fill="#eee"/></svg>
  <svg class="abs" style="left:1338px;top:345px" width="12" height="12"><circle cx="6" cy="6" r="4.600" fill="none" stroke="#8a8a8a" stroke-width="1.600"/><path d="M2.800 2.800l6.400 6.400" stroke="#8a8a8a" stroke-width="1.600"/></svg>
  <svg class="abs" style="left:1370px;top:345px" width="12" height="11"><path d="M1 0h10v10h-5v-5h-5z" fill="#8a8a8a"/><path d="M1 6l4 4h-4z" fill="#777"/></svg>
  <svg class="abs" style="left:1399px;top:344px" width="12" height="13"><path d="M1 3h10M4 3v-1.500h4v1.500" stroke="#8a8a8a" stroke-width="1.400" fill="none"/><path d="M2 4.500h8l-.8 8h-6.400z" fill="#8a8a8a"/><path d="M4.500 6v5M7.500 6v5" stroke="#535353" stroke-width=".9"/></svg>
  <div class="abs" style="left:1199px;top:358px;width:241px;height:4px;background:#333"></div>
  <!-- layers -->
  <div class="abs" style="left:1199px;top:362px;width:241px;height:17px;background:#3a3a3a"></div>
  <div class="ptab on abs" style="left:1199px;top:362px;width:38px">图层</div>
  <div class="ptab off abs" style="left:1237px;top:363px;width:37px;height:16px">通道</div>
  <div class="ptab off abs" style="left:1274px;top:363px;width:38px;height:16px">路径</div>
  <div class="ptab off abs" style="left:1312px;top:363px;width:61px;height:16px">历史记录</div>
  <svg class="pmenu abs" style="left:1422px;top:366px" width="14" height="9"><path d="M0 1.500h5l-2.500 3z" fill="#ddd"/><path d="M6 1h8M6 3.500h8M6 6h8M6 8.500h8" stroke="#ddd" stroke-width="1"/></svg>
  <div class="sel abs" style="left:1204px;top:384px;width:82px;height:18px;line-height:16px;padding-left:22px;font-size:11px">类型<svg class="abs" style="right:5px;top:3px" width="6" height="10"><path d="M0 3.700l3-3.700 3 3.700zM0 6.300l3 3.700 3-3.700z" fill="#fff"/></svg><svg class="abs" style="left:6px;top:3px" width="11" height="11"><circle cx="6.500" cy="4.500" r="3.300" fill="none" stroke="#eee" stroke-width="1.400"/><path d="M4.200 7l-3 3" stroke="#eee" stroke-width="1.600"/></svg></div>
  <svg class="abs" style="left:1300px;top:387px" width="14" height="12"><rect x=".5" y=".5" width="13" height="11" fill="none" stroke="#ddd"/><path d="M2 10l3.500-4 2.500 2.500 2-2 2.500 3.500z" fill="#ddd"/><circle cx="10" cy="3.500" r="1.200" fill="#ddd"/></svg>
  <svg class="abs" style="left:1324px;top:387px" width="12" height="12"><circle cx="6" cy="6" r="5" fill="none" stroke="#ddd" stroke-width="1.400"/><path d="M2.500 9.500a5 5 0 0 1 7-7z" fill="#ddd"/></svg>
  <svg class="abs" style="left:1348px;top:386px" width="12" height="13"><path d="M.5 1h11v3h-.8q-.3-1.800-1.800-1.800h-1.700v8.500q0 1 1.500 1.100v.7h-5.400v-.7q1.500-.1 1.500-1.100v-8.500h-1.700q-1.500 0-1.800 1.800h-.8z" fill="#ddd"/></svg>
  <svg class="abs" style="left:1372px;top:387px" width="13" height="13"><rect x="2" y="2" width="9" height="9" fill="none" stroke="#ddd" stroke-width="1.200"/><g fill="#ddd"><rect x="0" y="0" width="3.500" height="3.500"/><rect x="9.500" y="0" width="3.500" height="3.500"/><rect x="0" y="9.500" width="3.500" height="3.500"/><rect x="9.500" y="9.500" width="3.500" height="3.500"/></g></svg>
  <svg class="abs" style="left:1396px;top:386px" width="13" height="14"><path d="M4 .5h5.500l3 3v7h-8.500z" fill="#ddd"/><path d="M9.500 .5v3h3" fill="none" stroke="#777" stroke-width=".8"/><rect x=".5" y="7.500" width="6" height="6" fill="#aaa" stroke="#ddd"/></svg>
  <div class="abs" style="left:1425px;top:384px;width:9px;height:17px;border-radius:2px;background:linear-gradient(#8a8a8a 0 45%,#3a3a3a 55%);border:1px solid #2c2c2c"></div>
  <div class="abs" style="left:1199px;top:406px;width:241px;height:1px;background:#3e3e3e"></div>
  <div class="sel abs" style="left:1204px;top:412px;width:109px;height:18px;line-height:16px;padding-left:8px;font-size:11px">正常<svg class="abs" style="right:5px;top:3px" width="6" height="10"><path d="M0 3.700l3-3.700 3 3.700zM0 6.300l3 3.700 3-3.700z" fill="#fff"/></svg></div>
  <div class="pl abs" style="left:1323px;top:414px">不透明度:</div>
  <div class="dk abs" style="left:1379px;top:412px;width:36px;height:18px">100%</div>
  <div class="btn2 abs" style="left:1414px;top:412px;width:21px;height:18px"><svg class="abs" style="left:6px;top:7px" width="7" height="4"><path d="M0 0h7l-3.500 4z" fill="#fff"/></svg></div>
  <div class="abs" style="left:1199px;top:434px;width:241px;height:1px;background:#3e3e3e"></div>
  <div class="pl abs" style="left:1205px;top:441px">锁定:</div>
  <svg class="abs" style="left:1243px;top:443px" width="11" height="11"><rect x=".5" y=".5" width="10" height="10" fill="#888" stroke="#ccc"/><rect x="1" y="1" width="4.500" height="4.500" fill="#ddd"/><rect x="5.500" y="5.500" width="4.500" height="4.500" fill="#ddd"/></svg>
  <svg class="abs" style="left:1263px;top:441px" width="16" height="14"><path d="M15 1l-7 8" stroke="#ddd" stroke-width="1.800" stroke-linecap="round"/><path d="M8 8.500q1 4-3 4.500q-3 .3-4.500-.8q3.500-.8 5-4.500z" fill="#ddd"/></svg>
  <svg class="abs" style="left:1285px;top:441px" width="14" height="14"><path d="M7 1v12M1 7h12" stroke="#ddd" stroke-width="1.200"/><path d="M7 0l2.200 2.600h-4.400zM7 14l2.200-2.600h-4.400zM0 7l2.600-2.200v4.400zM14 7l-2.600-2.200v4.400z" fill="#ddd"/></svg>
  <svg class="abs" style="left:1309px;top:442px" width="11" height="13"><path d="M3 6v-2.500a2.500 2.500 0 0 1 5 0v2.500" fill="none" stroke="#ddd" stroke-width="1.500"/><rect x=".5" y="5.500" width="10" height="7" rx="1" fill="#ddd"/><rect x="4.500" y="8" width="2" height="2.500" fill="#555"/></svg>
  <div class="pl abs" style="left:1347px;top:441px">填充:</div>
  <div class="dk abs" style="left:1379px;top:440px;width:36px;height:18px">100%</div>
  <div class="btn2 abs" style="left:1414px;top:440px;width:21px;height:18px"><svg class="abs" style="left:6px;top:7px" width="7" height="4"><path d="M0 0h7l-3.500 4z" fill="#fff"/></svg></div>
  <!-- layer list -->
  <div class="abs" style="left:1199px;top:464px;width:225px;height:375px;background:#484848"></div>
  <div class="abs" style="left:1199px;top:464px;width:31px;height:80px;background:#535353;border-right:1px solid #3e3e3e"></div>
  <div class="abs" style="left:1230px;top:465px;width:194px;height:38px;background:#6a7e98"></div>
  <div class="abs" style="left:1230px;top:504px;width:194px;height:39px;background:#535353"></div>
  <div class="abs" style="left:1199px;top:503px;width:225px;height:1px;background:#3e3e3e"></div>
  <div class="abs" style="left:1199px;top:543px;width:225px;height:1px;background:#3e3e3e"></div>
  <svg class="abs" style="left:1207px;top:479px" width="14" height="10"><path d="M.5 5q6.500-8.500 13 0q-6.500 8-13 0z" fill="#d8d8d8"/><circle cx="7" cy="4.800" r="2.600" fill="#4a4a4a"/><circle cx="7" cy="4.800" r="1.200" fill="#d8d8d8"/></svg>
  <div class="abs" style="left:1208px;top:517px;width:12px;height:12px;background:#5e5e5e;border:1px solid #3e3e3e"></div>
  <div class="abs" style="left:1233px;top:468px;width:22px;height:32px;border:1px solid #000;background:repeating-conic-gradient(#ccc 0 25%,#fff 0 50%) 0 0/8px 8px"></div>
  <svg class="abs" style="left:1231px;top:466px" width="26" height="36"><path d="M.5 4.500v-4h4M21.500 .5h4v4M25.500 31.500v4h-4M4.500 35.500h-4v-4" fill="none" stroke="#fff" stroke-width="1"/><use href="#wm" x="3" y="3" width="20" height="30"/></svg>
  <div class="abs" style="left:1233px;top:507px;width:22px;height:32px;border:1px solid #000;background:#fff"></div>
  <svg class="abs" style="left:1231px;top:505px" width="26" height="36"><use href="#wm" x="3" y="3" width="20" height="30"/></svg>
  <div class="pl abs" style="left:1265px;top:478px;font-size:12px">背景 拷贝</div>
  <div class="pl abs" style="left:1267px;top:517px;font-size:12px;font-style:italic">背景</div>
  <svg class="abs" style="left:1397px;top:517px" width="10" height="12"><path d="M2.500 5.500v-2a2.500 2.500 0 0 1 5 0v2" fill="none" stroke="#ccc" stroke-width="1.200"/><rect x=".6" y="5.600" width="8.800" height="5.800" fill="none" stroke="#ccc" stroke-width="1.200"/><rect x="4" y="7.500" width="2" height="2" fill="#ccc"/></svg>
  <div class="abs" style="left:1424px;top:464px;width:16px;height:375px;background:#4f4f4f;border-left:1px solid #3e3e3e"></div>
  <!-- bottom icons -->
  <div class="abs" style="left:1199px;top:840px;width:241px;height:1px;background:#3a3a3a"></div>
  <svg class="abs" style="left:1235px;top:846px" width="15" height="9"><rect x="1" y="1.500" width="8" height="6" rx="3" fill="none" stroke="#bbb" stroke-width="1.500"/><rect x="6" y="1.500" width="8" height="6" rx="3" fill="none" stroke="#bbb" stroke-width="1.500"/></svg>
  <div class="abs" style="left:1264px;top:842px;font-style:italic;font-size:13px;color:#ddd;line-height:16px;letter-spacing:-.5px">fx</div>
  <svg class="abs" style="left:1277px;top:853px" width="4" height="3"><path d="M0 0h4l-2 3z" fill="#ccc"/></svg>
  <svg class="abs" style="left:1291px;top:846px" width="13" height="10"><rect width="13" height="10" fill="#ccc"/><circle cx="6.500" cy="5" r="2.800" fill="#444"/></svg>
  <svg class="abs" style="left:1318px;top:845px" width="12" height="12"><circle cx="6" cy="6" r="5" fill="none" stroke="#ccc" stroke-width="1.400"/><path d="M2.500 9.500a5 5 0 0 1 7-7z" fill="#ccc"/></svg>
  <svg class="abs" style="left:1331px;top:854px" width="4" height="3"><path d="M0 0h4l-2 3z" fill="#ccc"/></svg>
  <svg class="abs" style="left:1345px;top:845px" width="13" height="11"><path d="M0 1.500h5l1.500 1.500h6.500v8h-13z" fill="#ccc"/></svg>
  <svg class="abs" style="left:1372px;top:845px" width="12" height="12"><path d="M1 0h10v11h-5.500v-5h-4.500z" fill="#ddd"/><path d="M1 7l4 4h-4z" fill="#999"/></svg>
  <svg class="abs" style="left:1398px;top:844px" width="12" height="13"><path d="M1 3h10M4 3v-1.500h4v1.500" stroke="#ccc" stroke-width="1.400" fill="none"/><path d="M2 4.500h8l-.8 8h-6.400z" fill="#ccc"/><path d="M4.500 6v5M7.500 6v5" stroke="#535353" stroke-width=".9"/></svg>
</div>
<div id="taskbar" class="abs">
  <div class="abs" style="left:9px;top:2px;width:36px;height:36px;border-radius:18px;background:radial-gradient(circle at 50% 108%,#6fe0ff 0,#2a8ad0 28%,transparent 55%),radial-gradient(circle at 50% 28%,#86c4ee 0,#2f7cc2 42%,#0e3f84 78%,#0a3270 100%);box-shadow:0 0 0 1px rgba(15,40,80,.7),0 0 3px 1px rgba(200,230,255,.45)"></div>
  <svg class="abs" style="left:15px;top:7px" width="25" height="25" viewBox="0 0 25 25"><path d="M3 5q4-3 8-1l-1.600 7q-4-2-8 .5z" fill="#f0602a"/><path d="M12.500 4.500q4 2 8.500-.5l-1.600 7q-4.500 2.500-8.500.5z" fill="#8cc63f"/><path d="M1 13q4-2.500 8-.5l-1.600 7q-4-2-8 .5z" fill="#3aa0e8"/><path d="M10.500 13q4 2 8.500-.5l-1.600 7q-4.500 2.500-8.500.5z" fill="#f8c420"/></svg>
  <div class="tb abs" style="left:60px;background:linear-gradient(rgba(220,220,220,.75),rgba(185,187,190,.7))"></div>
  <div class="abs" style="left:74px;top:5px;width:30px;height:30px;border-radius:15px;background:#23a1ea"></div>
  <svg class="abs" style="left:74px;top:5px" width="30" height="30" viewBox="0 0 30 30"><circle cx="15" cy="15" r="6.500" fill="#fff"/><path d="M24 5q-5 2-9 6l4 4q4-4 5-10zM6 25q5-2 9-6l-4-4q-4 4-5 10z" fill="#fff"/></svg>
  <div class="tb abs" style="left:122px;background:linear-gradient(rgba(240,240,240,.9),rgba(205,207,210,.88))"></div>
  <div class="abs" style="left:137px;top:4px;width:29px;height:29px;background:#0d1b38;border:2px solid #5fc0ea;color:#6fcdf5;font-size:17px;font-weight:bold;line-height:25px;text-align:center;letter-spacing:-.5px"><span style="display:inline-block;transform:scaleX(.8)">Ps</span></div>
  <div id="tray" class="abs" style="left:0;top:0">
    <div class="abs" style="left:1119px;top:10px;font-family:'Liberation Mono',monospace;font-size:12px;line-height:14px;letter-spacing:-1px;text-shadow:0 0 1px #fff">CH</div>
    <div class="abs" style="left:1140px;top:10px;width:17px;height:16px;background:#e8501e;border-radius:2px;transform:rotate(-4deg)"></div>
    <svg class="abs" style="left:1140px;top:10px" width="17" height="16"><path d="M13.500 4.200q-5-2.200-8.500-.5q-2 1.500 0 3l6 1.800q2 1.500-.5 3q-3.500 1.200-8-.8" fill="none" stroke="#fff" stroke-width="2.600"/></svg>
    <div class="abs" style="left:1162px;top:10px;width:17px;height:17px;border-radius:9px;background:radial-gradient(circle at 50% 35%,#3a4ad8,#0a1680);border:1.500px solid #e8ecf8;color:#fff;font-weight:bold;font-size:12px;line-height:14px;text-align:center">?</div>
    <svg class="abs" style="left:1187px;top:8px" width="10" height="8"><rect x="3.500" y=".5" width="6" height="4" fill="none" stroke="#fff"/><rect x=".5" y="3.500" width="6" height="4" fill="#8a9098" stroke="#fff"/></svg>
    <svg class="abs" style="left:1188px;top:21px" width="8" height="4"><path d="M0 0h8l-4 4z" fill="#fff"/></svg>
    <div class="abs" style="left:1206px;top:12px;width:17px;height:16px;background:linear-gradient(#3aa4f0,#1a78d8);border-radius:1px"></div>
    <svg class="abs" style="left:1206px;top:12px" width="17" height="16"><path d="M2.500 6.500q6-5 12 0" fill="none" stroke="#fff" stroke-width="1.800"/><path d="M5 9.500q3.500-3 7 0" fill="none" stroke="#fff" stroke-width="1.700"/><circle cx="8.500" cy="12.500" r="1.500" fill="#fff"/></svg>
    <svg class="abs" style="left:1229px;top:11px" width="17" height="18"><path d="M8.500 .5l7.500 2.500q.5 9-7.500 14.500q-8-5.500-7.500-14.500z" fill="#3aa83a" stroke="#e8f4e0" stroke-width="1.200"/><path d="M10 4l-4 5.500h3l-1.500 4.500 4.500-6h-3z" fill="#f4f8e0"/></svg>
    <div class="abs" style="left:1253px;top:12px;width:17px;height:17px;border-radius:9px;background:radial-gradient(circle at 45% 40%,#f0f020,#a8c800 70%,#6a9000);border:1px solid #5a7a00"></div>
    <svg class="abs" style="left:1253px;top:12px" width="17" height="17"><path d="M8.500 4v9M4 8.500h9" stroke="#1a6a10" stroke-width="2.600"/></svg>
    <svg class="abs" style="left:1278px;top:11px" width="18" height="18"><path d="M4 1h9v5h-9z" fill="#f4f4f4" stroke="#999" stroke-width=".6"/><path d="M1 6h15l1 7h-17z" fill="#d4d4d4" stroke="#888" stroke-width=".6"/><path d="M7 11l3 3.500 6-8" fill="none" stroke="#2fb02f" stroke-width="2.400"/></svg>
    <svg class="abs" style="left:1302px;top:12px" width="17" height="15"><g fill="#fff" stroke="#3a4048" stroke-width=".7" paint-order="stroke"><rect x="1" y="11" width="2.400" height="3"/><rect x="4.200" y="9" width="2.400" height="5"/><rect x="7.400" y="6.500" width="2.400" height="7.500"/><rect x="10.600" y="4" width="2.400" height="10"/><rect x="13.800" y="1" width="2.400" height="13"/></g></svg>
    <svg class="abs" style="left:1326px;top:12px" width="16" height="16"><path d="M1 5.500h3l4-4v13l-4-4h-3z" fill="#fff" stroke="#666" stroke-width=".5"/><path d="M10 5q2 3 0 6M12 3q3.500 5 0 10" fill="none" stroke="#fff" stroke-width="1.200"/></svg>
    <div class="abs" style="left:1352px;top:3px;width:70px;text-align:center;line-height:16px;font-size:13px">9:12</div>
    <div class="abs" style="left:1352px;top:21px;width:70px;text-align:center;line-height:16px;font-size:13px">2015/6/10</div>
    <div class="abs" style="left:1427px;top:0;width:13px;height:40px;background:linear-gradient(90deg,rgba(255,255,255,.25),rgba(255,255,255,.08));border-left:1px solid rgba(40,45,50,.7);box-shadow:inset 1px 0 0 rgba(255,255,255,.45)"></div>
  </div>
</div>
<!-- floating widget -->
<div class="abs" style="left:1022px;top:836px;width:179px;height:24px;background:#f3f3f3"></div>
<div class="abs" style="left:1017px;top:834px;width:27px;height:25px;background:#e9511f;border-radius:3px;transform:rotate(-8deg)"></div>
<svg class="abs" style="left:1017px;top:834px" width="27" height="25"><path d="M22 7q-8-4-13.500-1q-3.500 2.500 0 5l9 2.500q3.500 2.500-.5 5q-6 2-13-1.500" fill="none" stroke="#fff" stroke-width="4.200" transform="rotate(-8 13 12)"/></svg>
<svg class="abs" style="left:1163px;top:842px" width="13" height="14"><path d="M0 14q0-6 3-8q-1-3 2-5q5 0 5 5q3 3 2 8z" fill="#2f6fb8"/></svg>
<svg class="abs" style="left:1180px;top:840px" width="17" height="16"><path d="M3.500 14.500l7-7" stroke="#2a6fd0" stroke-width="3.200" stroke-linecap="round"/><path d="M9 5.500a4 4 0 0 1 5-3.500l-2.500 2.500 1.500 1.500 2.500-2.500a4 4 0 0 1-5.500 4.500z" fill="#2a6fd0"/></svg>
<div class="abs" style="left:1193px;top:833px;width:9px;height:9px;border-radius:5px;background:#e84a20"></div>
<div class="abs" style="left:1060px;top:818px;width:111px;height:38px;border-radius:0 19px 19px 0;background:linear-gradient(#f6f6f6,#ececec);box-shadow:0 1px 3px rgba(0,0,0,.45)"></div>
<div class="abs" style="left:1046px;top:813px;width:47px;height:47px;border-radius:24px;background:#f4f8f4;box-shadow:0 1px 4px rgba(0,0,0,.5)"></div>
<div class="abs" style="left:1048px;top:815px;width:43px;height:43px;border-radius:22px;background:linear-gradient(#0e7c50 0,#128a5a 36%,#3cc45c 36.500%,#38bc56 100%);box-shadow:inset 0 0 3px rgba(0,60,30,.6);color:#e8ffe8;font-size:14px;line-height:43px;text-align:center">60%</div>
<div class="abs" style="left:1062px;top:817px;width:12px;height:4px;border-radius:3px;background:rgba(255,255,255,.45);filter:blur(1px)"></div>
<svg class="abs" style="left:1096px;top:825px" width="8" height="9"><path d="M4 0l4 4h-2.700v5h-2.600v-5h-2.700z" fill="#e05a5a"/></svg>
<svg class="abs" style="left:1096px;top:840px" width="8" height="9"><path d="M4 9l4-4h-2.700v-5h-2.600v5h-2.700z" fill="#2fa060"/></svg>
<div class="abs" style="left:1110px;top:823px;width:33px;text-align:right;font-size:9.500px;line-height:12px;color:#111">0K/s</div>
<div class="abs" style="left:1110px;top:838px;width:33px;text-align:right;font-size:9.500px;line-height:12px;color:#111">0K/s</div>
<div class="abs" style="left:1147px;top:829px;width:17px;height:17px;border-radius:9px;background:#3d7fdc"></div>
<svg class="abs" style="left:1147px;top:829px" width="17" height="17"><path d="M8.500 4v9M4 8.500h9" stroke="#fff" stroke-width="2"/></svg>
<div class="abs" style="left:1158px;top:826px;width:8px;height:8px;border-radius:4px;background:#e83848"></div>

</body>
</html>
